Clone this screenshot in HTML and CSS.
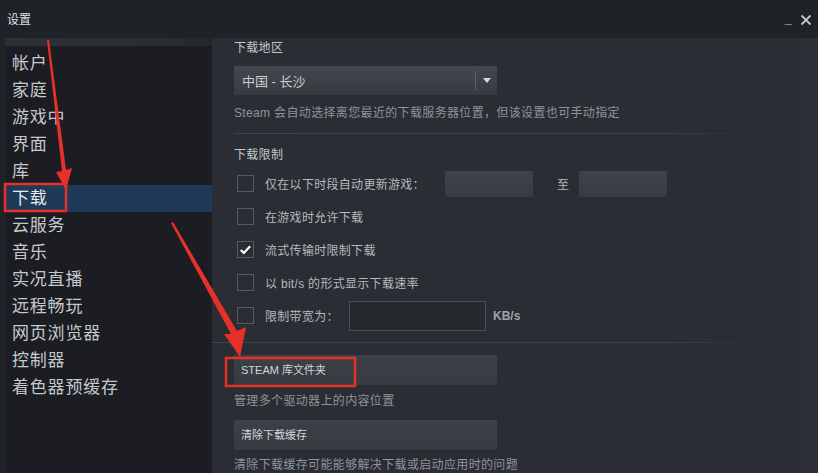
FILE: index.html
```html
<!DOCTYPE html>
<html lang="zh-CN">
<head>
    <meta charset="UTF-8">
    <title>设置</title>
    <link rel="stylesheet" href="styles.css">
</head>
<body>
    <div class="window">
        <div class="titlebar">
            <span class="title">设置</span>
            <div class="window-controls">
                <span class="win-btn win-min">_</span>
                <svg class="win-btn win-close" viewBox="0 0 12 12">
                    <path d="M1.5 1.5l9 9M10.5 1.5l-9 9" stroke="currentColor" stroke-width="1.8" fill="none"/>
                </svg>
            </div>
        </div>

        <div class="main">
            <div class="sidebar">
                <div class="sidebar-top"></div>
                <ul class="nav">
                    <li class="nav-item">帐户</li>
                    <li class="nav-item">家庭</li>
                    <li class="nav-item">游戏中</li>
                    <li class="nav-item">界面</li>
                    <li class="nav-item">库</li>
                    <li class="nav-item active">下载</li>
                    <li class="nav-item">云服务</li>
                    <li class="nav-item">音乐</li>
                    <li class="nav-item">实况直播</li>
                    <li class="nav-item">远程畅玩</li>
                    <li class="nav-item">网页浏览器</li>
                    <li class="nav-item">控制器</li>
                    <li class="nav-item">着色器预缓存</li>
                </ul>
            </div>

            <div class="content">
                <div class="section-title">下载地区</div>
                <div class="dropdown">
                    <span class="dropdown-value">中国 - 长沙</span>
                    <span class="dropdown-arrow"></span>
                </div>
                <div class="help-text first-help">Steam 会自动选择离您最近的下载服务器位置，但该设置也可手动指定</div>

                <div class="divider"></div>

                <div class="section-title">下载限制</div>
                <div class="check-list">
                    <div class="check-row">
                        <span class="checkbox"></span>
                        <span class="check-label label-schedule">仅在以下时段自动更新游戏：</span>
                        <span class="time-input"></span>
                        <span class="to-label">至</span>
                        <span class="time-input"></span>
                    </div>
                    <div class="check-row">
                        <span class="checkbox"></span>
                        <span class="check-label">在游戏时允许下载</span>
                    </div>
                    <div class="check-row">
                        <span class="checkbox checked">
                            <svg viewBox="0 0 16 16">
                                <path d="M3 8.5l3.2 3.2L13 4.5" stroke="#fff" stroke-width="2.4" fill="none"/>
                            </svg>
                        </span>
                        <span class="check-label">流式传输时限制下载</span>
                    </div>
                    <div class="check-row">
                        <span class="checkbox"></span>
                        <span class="check-label">以 bit/s 的形式显示下载速率</span>
                    </div>
                    <div class="check-row">
                        <span class="checkbox"></span>
                        <span class="check-label label-bandwidth">限制带宽为：</span>
                        <span class="text-input"></span>
                        <span class="unit-label">KB/s</span>
                    </div>
                </div>

                <div class="divider divider-wide"></div>

                <div class="btn">STEAM 库文件夹</div>
                <div class="help-text">管理多个驱动器上的内容位置</div>
                <div class="btn btn-second">清除下载缓存</div>
                <div class="help-text last-help">清除下载缓存可能能够解决下载或启动应用时的问题</div>
            </div>

            <div class="scroll-track"></div>
        </div>

        <svg class="annotations" viewBox="0 0 818 473">
            <rect x="5" y="184" width="61" height="27" fill="none" stroke="#e8302a" stroke-width="2.5"/>
            <rect x="226" y="358" width="129" height="28" fill="none" stroke="#e8302a" stroke-width="2.5"/>
            <polygon points="47,40 49,40 66,170 72,168 66,190 56,172 62,171" fill="#e8302a"/>
            <polygon points="171,223 173,222 237,331 246,327 240,357 224,334 231,334" fill="#e8302a"/>
        </svg>
    </div>
</body>
</html>
```

FILE: styles.css
```css
* {
    box-sizing: border-box;
}

body {
    margin: 0;
    width: 818px;
    height: 473px;
    overflow: hidden;
    background-color: #1f2227;
    font-family: "Liberation Sans", "Noto Sans CJK SC", sans-serif;
    color: #b6bbc0;
}

.window {
    position: relative;
    width: 818px;
    height: 473px;
}

.titlebar {
    height: 38px;
    display: flex;
    justify-content: space-between;
    align-items: flex-start;
    padding: 12px 6px 0 7px;
}

.title {
    font-size: 12px;
    line-height: 16px;
    color: #dde1e4;
}

.window-controls {
    display: flex;
    align-items: flex-end;
    gap: 8px;
    color: #c3c7cb;
}

.win-min {
    font-size: 13px;
    line-height: 14px;
    font-weight: bold;
}

.win-close {
    width: 12px;
    height: 12px;
}

.main {
    display: flex;
    height: 435px;
}

.sidebar {
    width: 207px;
    margin-left: 5px;
    background-color: #1b1d22;
}

.sidebar-top {
    height: 8px;
    background: linear-gradient(to right, #2d3036, #2a2d33 80%, #23262b);
}

.nav {
    list-style: none;
    margin: 0;
    padding: 4px 0 0 0;
}

.nav-item {
    height: 27px;
    line-height: 27px;
    padding-left: 7px;
    font-size: 17px;
    letter-spacing: 0.8px;
    color: #c5c9cd;
    white-space: nowrap;
}

.nav-item.active {
    background-color: #1e3a58;
    color: #e6eaed;
}

.content {
    flex: 1;
    background-color: #2a2d33;
    padding: 1px 0 0 22px;
}

.scroll-track {
    width: 18px;
    background-color: #2c2f36;
}

.section-title {
    font-size: 12px;
    line-height: 18px;
    letter-spacing: 0.3px;
    color: #c4c8cc;
}

.dropdown {
    width: 263px;
    height: 29px;
    margin-top: 9px;
    display: flex;
    align-items: center;
    justify-content: space-between;
    background: linear-gradient(to bottom, #42474e, #373b41);
    padding-left: 8px;
}

.dropdown-value {
    font-size: 13px;
    color: #c9ccd0;
}

.dropdown-arrow {
    width: 22px;
    height: 19px;
    border-left: 1px solid #5e636a;
    display: flex;
    align-items: center;
    justify-content: center;
}

.dropdown-arrow::after {
    content: "";
    border-left: 4px solid transparent;
    border-right: 4px solid transparent;
    border-top: 5px solid #d8dbde;
}

.help-text {
    font-size: 12px;
    line-height: 18px;
    letter-spacing: 0.35px;
    color: #8e949a;
    margin-top: 7px;
}

.first-help {
    margin-top: 9px;
}

.last-help {
    margin-top: 6px;
}

.divider {
    height: 1px;
    width: 526px;
    margin: 11px 0 12px 0;
    background: linear-gradient(to right, #3f434a, #3d4148 80%, rgba(61, 65, 72, 0));
}

.divider-wide {
    width: 556px;
    margin: 10px 0 12px -22px;
}

.check-list {
    margin-top: 3px;
}

.check-row {
    height: 33px;
    display: flex;
    align-items: center;
}

.checkbox {
    width: 17px;
    height: 17px;
    margin-left: 3px;
    border: 1px solid #565a61;
    display: flex;
    align-items: center;
    justify-content: center;
}

.checkbox svg {
    width: 15px;
    height: 15px;
}

.check-label {
    margin-left: 11px;
    font-size: 12px;
    letter-spacing: 0.3px;
    color: #b4b9be;
    white-space: nowrap;
}

.label-schedule {
    width: 180px;
}

.label-bandwidth {
    width: 84px;
}

.time-input {
    width: 88px;
    height: 26px;
    background: linear-gradient(to bottom, #3f434a, #383c42);
}

.to-label {
    font-size: 12px;
    color: #b4b9be;
    margin: 0 10px 0 24px;
}

.text-input {
    width: 137px;
    height: 30px;
    border: 1px solid #4a4e55;
    background-color: #26292e;
}

.unit-label {
    margin-left: 7px;
    font-size: 12px;
    font-weight: bold;
    color: #9fa4a9;
}

.btn {
    width: 263px;
    height: 30px;
    line-height: 30px;
    padding-left: 7px;
    font-size: 11px;
    color: #d2d5d8;
    background: linear-gradient(to bottom, #3c4047, #373b41);
}

.btn-second {
    margin-top: 10px;
}

.annotations {
    position: absolute;
    top: 0;
    left: 0;
    width: 818px;
    height: 473px;
    pointer-events: none;
}
```
